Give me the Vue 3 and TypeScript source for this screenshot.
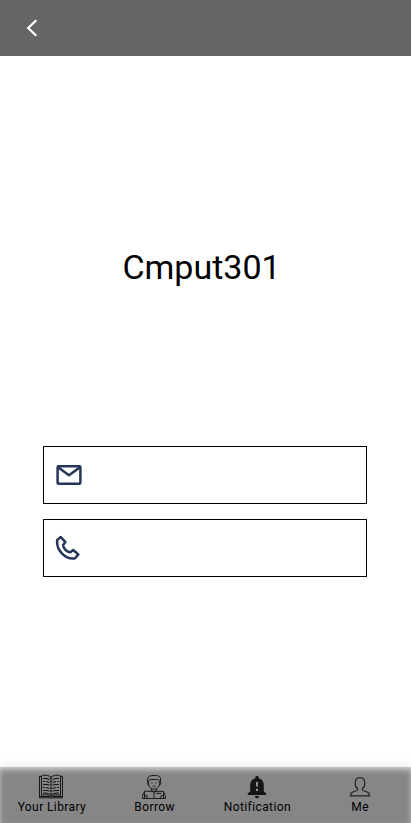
<script setup lang="ts">
interface Tab {
  id: 'library' | 'borrow' | 'notification' | 'me'
  label: string
}

const username = 'Cmput301'
const tabs: Tab[] = [
  { id: 'library', label: 'Your Library' },
  { id: 'borrow', label: 'Borrow' },
  { id: 'notification', label: 'Notification' },
  { id: 'me', label: 'Me' },
]
</script>

<template>
  <div class="screen">
    <header class="topbar">
      <button class="back" type="button">
        <svg width="24" height="24" viewBox="0 0 24 24">
          <path d="M16.3 4.2 8.2 12l8.1 7.8" fill="none" stroke="#fff" stroke-width="2.2" />
        </svg>
      </button>
    </header>

    <main class="profile">
      <h1 class="name">{{ username }}</h1>
      <div class="field">
        <svg class="mail" width="26" height="20" viewBox="0 0 26 20" fill="none" stroke="#253557" stroke-width="2.5" stroke-linejoin="round">
          <rect x="1.6" y="1.2" width="22.8" height="17.6" rx="1.2" />
          <path d="M2 2.2 13 10.2 24 2.2" />
        </svg>
      </div>
      <div class="field">
        <svg class="phone" width="26" height="26" viewBox="0 0 26 26" fill="none" stroke="#253557" stroke-width="2.5" stroke-linejoin="round">
          <path d="M2.2 4.9 5.8 2 10.4 7.1 8.1 10.1C8.4 13.5 11.6 16.8 15.4 17.3L18.2 15 23.3 19.4 20.1 23.2C10.6 24.9 1 15.2 2.2 4.9Z" />
        </svg>
      </div>
    </main>

    <nav class="tabs">
      <a v-for="tab in tabs" :key="tab.id" class="tab">
        <svg v-if="tab.id === 'library'" width="26" height="26" viewBox="0 0 26 26" fill="none" stroke="#151515">
          <path d="M3 2.5H1.5v21.3h23V2.5H23M1.5 22.5h10l1.5 1.2 1.5-1.2h10" />
          <path d="M13 3.2C10 .7 6 1 3.5 1.8v19.4c3.5-.7 6.8-.6 9.5.8 2.7-1.4 6-1.5 9.5-.8V1.8C20 1 16 .7 13 3.2Z" />
          <path d="M13 3.2V22" stroke-width="1.5" stroke-dasharray="2.2 .9" />
          <path
            d="M5 4.5h3.5l3 1M5 7.5h1.8m1.2 0 3.5 1M5 10.5h4l2.5.8M5 13.5h2m1 0 3.5 1M5 16.5h4l2.5.8M5 19h2.5l4 1M21 4.5h-3.5l-3 1M21 7.5h-1.8m-1.2 0-3.5 1M21 10.5h-4l-2.5.8M21 13.5h-2m-1 0-3.5 1M21 16.5h-4l-2.5.8M21 19h-2.5l-4 1"
            stroke-width="1.1"
          />
        </svg>
        <svg v-else-if="tab.id === 'borrow'" width="26" height="26" viewBox="0 0 26 26" fill="none" stroke="#1b1b1b">
          <path d="M6.6 8V4.5C7 2.5 9.3 1.5 12 1.5h2.5c3.2 0 5 1.2 5 3.5v3M7.5 7.5C8 5.5 9.5 5.2 11 5.5h4.5c1.7-.1 2.8.5 3.1 2M7.5 7v2.8c.2 3.2 2.4 5.4 5.5 5.4s5.4-2.2 5.6-5.4V7M7.5 8.3c-1.7-.6-1.7 2.7.2 2.5m10.9-2.5c1.7-.6 1.7 2.7-.2 2.5" />
          <path d="M10.3 9h1.2m3 0h1.2M11.5 12.2h3" stroke-width=".9" />
          <path d="M10.5 14.8v1.8l2.5 1 2.5-1v-1.8M3.5 24.5V17.3H11l2 1 2-1h7.5v7.2ZM13 18.3v6.2M4 17.5c-1.8 1-2.2 3.5-2.5 7H6v-2.8H3.5M22 17.5c1.8 1 2.2 3.5 2.5 7H20v-2.8h2.5M15.2 19.4h5" />
        </svg>
        <svg v-else-if="tab.id === 'notification'" width="26" height="26" viewBox="0 0 26 26" fill="#151515">
          <path d="M11.3 4.2V3.5a1.7 1.7 0 0 1 3.4 0v.7c3.4.8 5.1 3.5 5.1 6.8v6.2l2.5 2.5V21H3.7v-1.3l2.5-2.5V11c0-3.3 1.7-6 5.1-6.8Z" />
          <path d="M10.8 22h4.4a2.2 2.2 0 0 1-4.4 0Z" />
          <path d="M12 8h2v4.5h-2zM12 14.7h2v2.3h-2z" fill="#929292" />
        </svg>
        <svg v-else width="26" height="26" viewBox="0 0 26 26" fill="none" stroke="#202020" stroke-width="1.15">
          <path d="M10.6 14.8C8.9 13.6 8.2 11.5 8.2 9c0-3.3 1.8-5.3 4.8-5.3s4.8 2 4.8 5.3c0 2.5-.7 4.6-2.4 5.8-.5 1 .1 1.6 1.3 2l3 .9c2.1.6 2.8 2 2.8 4.1h-19c0-2.1.7-3.5 2.8-4.1l3-.9c1.2-.4 1.8-1 1.3-2Z" />
        </svg>
        <span class="label">{{ tab.label }}</span>
      </a>
    </nav>
  </div>
</template>

<style>
body {
  margin: 0;
  background: #fff;
}
</style>

<style scoped>
.screen {
  display: flex;
  flex-direction: column;
  height: 823px;
  overflow: hidden;
  background: #fff;
  color: #000;
  font-family: Roboto, sans-serif;
}
.topbar {
  display: flex;
  align-items: center;
  flex: none;
  height: 56px;
  padding-left: 20px;
  background: #666;
}
.back {
  display: flex;
  padding: 0;
  border: 0;
  background: none;
}
.profile {
  display: flex;
  flex: 1;
  flex-direction: column;
  gap: 15px;
  padding: 191px 44px 0 43px;
}
.name {
  height: 40px;
  margin: 0 7px 144px 0;
  font-size: 34px;
  font-weight: 400;
  line-height: 40px;
  text-align: center;
}
.field {
  display: flex;
  align-items: center;
  box-sizing: border-box;
  height: 58px;
  padding-left: 12px;
  border: 1px solid #000;
}
.phone {
  margin-left: -1px;
}
.tabs {
  display: flex;
  flex: none;
  box-sizing: border-box;
  height: 56px;
  padding-top: 7px;
  background: #868686;
  box-shadow:
    0 -1px 10px rgba(0, 0, 0, 0.1),
    inset 0 3px 5px -1px rgba(255, 255, 255, 0.6),
    inset 0 4px 8px rgba(255, 255, 255, 0.15);
}
.tab {
  display: flex;
  flex: 1 1 0;
  flex-direction: column;
  align-items: center;
}
.tab svg {
  flex: none;
}
.label {
  padding-left: 1px;
  font-size: 12px;
  line-height: 14px;
  letter-spacing: 0.4px;
  white-space: nowrap;
}
</style>
